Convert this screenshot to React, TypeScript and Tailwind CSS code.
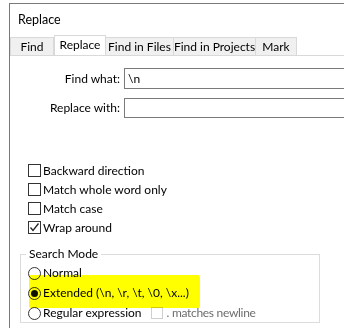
import React from 'react';

const font = { fontFamily: 'Lato, "Liberation Sans", Arial, sans-serif' };

function Tab({ label, width, active }: { label: string; width: string; active?: boolean }) {
  if (active) {
    return (
      <div className={`${width} h-[21px] -mb-px flex items-center justify-center whitespace-nowrap bg-white border border-b-0 border-[#d9d9d9] pb-[2px]`}>
        {label}
      </div>
    );
  }
  return (
    <div className={`${width} h-[18px] flex items-center justify-center whitespace-nowrap bg-[#f0f0f0] border border-b-0 border-[#d9d9d9] -ml-px first:ml-0`}>
      {label}
    </div>
  );
}

function CheckBox({ label, checked }: { label: string; checked?: boolean }) {
  return (
    <div className="flex items-center h-[19px]">
      <div className="w-[13px] h-[13px] border border-[#333] bg-white flex items-center justify-center">
        {checked && (
          <svg width="11" height="11" viewBox="0 0 11 11">
            <polyline points="1.5,5.5 4,8.5 9.5,1.5" fill="none" stroke="#222" strokeWidth="1.3" />
          </svg>
        )}
      </div>
      <span className="ml-[2px]">{label}</span>
    </div>
  );
}

function Radio({ label, checked, children }: { label: string; checked?: boolean; children?: React.ReactNode }) {
  return (
    <div className="flex items-center h-[20px] whitespace-nowrap">
      <div className="w-[13px] h-[13px] rounded-full border border-[#333] bg-white flex items-center justify-center">
        {checked && <div className="w-[7px] h-[7px] rounded-full bg-[#111]" />}
      </div>
      <span className="ml-[2px]">{label}</span>
      {children}
    </div>
  );
}

export default function App() {
  return (
    <div className="w-[344px] h-[328px] bg-white overflow-hidden text-[12px] text-black" style={font}>
      <div className="ml-[9px] mt-[3px] h-[325px] border-l border-t border-[#7a7a7a] flex flex-col">
        <div className="h-[30px] pl-[8px] pt-[7px] text-[12.5px]">Replace</div>

        <div className="flex items-end h-[21px]">
          <Tab label="Find" width="w-[44px]" />
          <Tab label="Replace" width="w-[52px]" active />
          <Tab label="Find in Files" width="w-[69px]" />
          <Tab label="Find in Projects" width="w-[83px]" />
          <Tab label="Mark" width="w-[42px]" />
        </div>

        <div className="border-t border-[#d9d9d9] flex-1 relative">
          <div className="mt-[12px] flex items-center">
            <div className="w-[114px] text-right pr-[4px]">Find what:</div>
            <div className="flex-1 h-[21px] border border-[#7a7a7a] border-r-0 flex items-center pl-[3px]">\n</div>
          </div>
          <div className="mt-[9px] flex items-center">
            <div className="w-[114px] text-right pr-[4px]">Replace with:</div>
            <div className="flex-1 h-[20px] border border-[#7a7a7a] border-r-0" />
          </div>

          <div className="ml-[18px] mt-[43px] flex flex-col">
            <CheckBox label="Backward direction" />
            <CheckBox label="Match whole word only" />
            <CheckBox label="Match case" />
            <CheckBox label="Wrap around" checked />
          </div>

          <div className="relative ml-[10px] mt-[17px] w-[300px] h-[69px] border border-[#dcdcdc]">
            <div className="absolute -top-[8px] left-[5px] bg-white px-[3px] leading-[14px]">Search Mode</div>
            <div className="pl-[7px] pt-[8px] flex flex-col">
              <Radio label="Normal" />
              <Radio label="Extended (\n, \r, \t, \0, \x...)" checked />
              <Radio label="Regular expression">
                <div className="ml-[9px] w-[12px] h-[12px] border border-[#cfcfcf]" />
                <span className="ml-[4px] text-[#6d6d6d] tracking-[-0.3px]">. matches newline</span>
              </Radio>
            </div>
            <div className="absolute left-[8px] top-[20px] w-[171px] h-[33px] bg-[#ffff00] mix-blend-multiply rounded-[2px]" />
          </div>
        </div>
      </div>
    </div>
  );
}
